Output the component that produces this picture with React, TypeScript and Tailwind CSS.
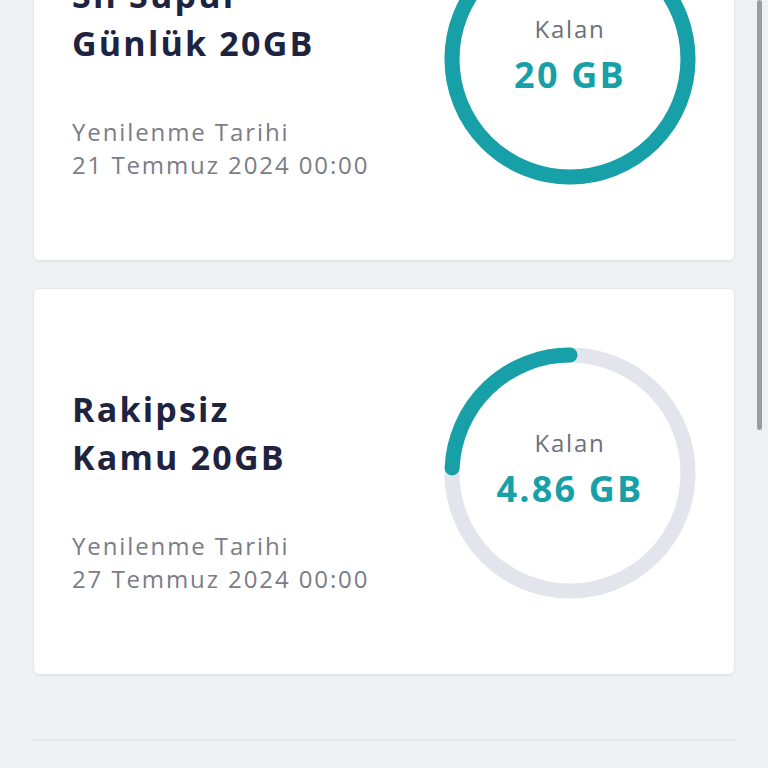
import React from "react";

const PACKS = [
  { title: ["Sil Süpür", "Günlük 20GB"], date: "21 Temmuz 2024 00:00", left: 20, total: 20, label: "20 GB" },
  { title: ["Rakipsiz", "Kamu 20GB"], date: "27 Temmuz 2024 00:00", left: 4.86, total: 20, label: "4.86 GB" },
];

const R = 118;
const C = 2 * Math.PI * R;

function Ring({ left, total, label }: { left: number; total: number; label: string }) {
  const len = (left / total) * C;
  return (
    <div className="relative w-[252px] h-[252px] shrink-0">
      <svg width="252" height="252" viewBox="0 0 252 252" className="absolute inset-0 -scale-x-100">
        <circle cx="126" cy="126" r={R} fill="none" stroke="#e2e5ec" strokeWidth="15" />
        <circle
          cx="126"
          cy="126"
          r={R}
          fill="none"
          stroke="#18a0a8"
          strokeWidth="15"
          strokeLinecap="round"
          strokeDasharray={`${len} ${C}`}
          transform="rotate(-90 126 126)"
        />
      </svg>
      <div className="absolute inset-0 flex flex-col items-center justify-center pb-[8px]">
        <span className="text-[24px] leading-[32px] tracking-[1.8px] text-[#6d7079]">Kalan</span>
        <span className="mt-[8px] text-[36px] leading-[44px] font-bold tracking-[2.2px] text-[#18a0a8]">{label}</span>
      </div>
    </div>
  );
}

export default function App() {
  return (
    <div className="relative h-[768px] w-[768px] overflow-hidden bg-[#f0f1f5]" style={{ fontFamily: "'Open Sans', 'Noto Sans', sans-serif" }}>
      <div className="-mt-[126px] flex flex-col gap-[27px] px-[33px]">
        {PACKS.map((p) => (
          <div key={p.date} className="flex h-[387px] items-start rounded-[6px] border border-[#e4e6eb] bg-white px-[38px] shadow-[0_1px_2px_rgba(0,0,0,0.06)]">
            <div className="flex flex-col pt-[96px]">
              <div className="text-[34px] leading-[48px] font-bold tracking-[2.2px] text-[#1e2340]">
                {p.title.map((t) => (
                  <div key={t}>{t}</div>
                ))}
              </div>
              <div className="mt-[48px] text-[24px] leading-[33px] tracking-[1.9px] text-[#7a7d86]">
                <div>Yenilenme Tarihi</div>
                <div>{p.date}</div>
              </div>
            </div>
            <div className="ml-auto mt-[58px]">
              <Ring left={p.left} total={p.total} label={p.label} />
            </div>
          </div>
        ))}
        <div className="mt-[37px] h-[2px] bg-[#e3e5ea]" />
      </div>
      {/* scroll indicator */}
      <div className="absolute right-[6px] top-0 h-[430px] w-[5px] rounded-full bg-[#9b9ca1]" />
    </div>
  );
}
